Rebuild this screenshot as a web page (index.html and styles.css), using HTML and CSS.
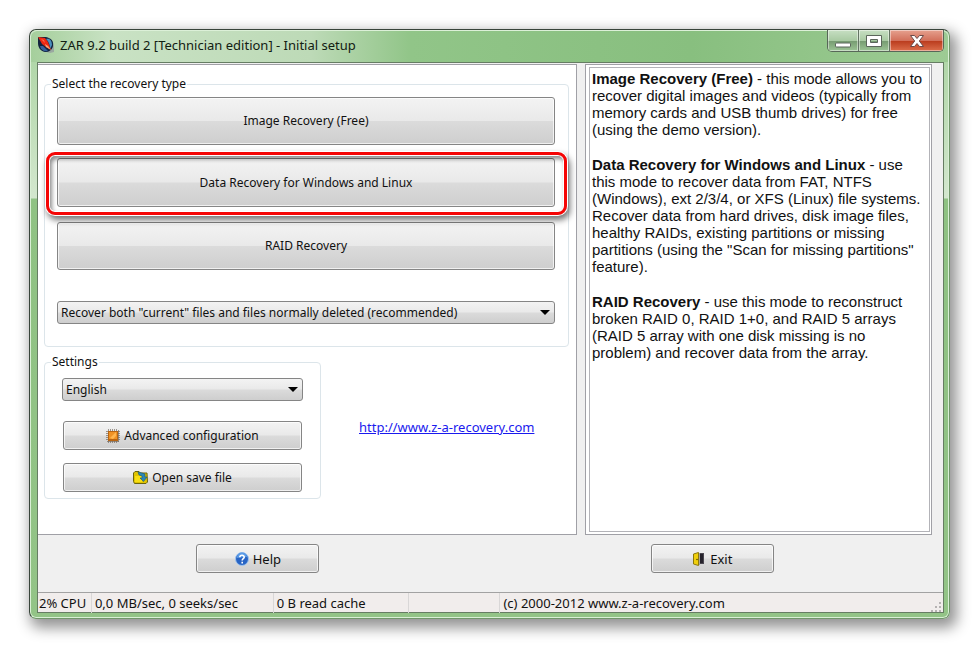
FILE: index.html
```html
<!DOCTYPE html>
<html lang="en">
<head>
<meta charset="utf-8">
<title>ZAR 9.2 - Initial setup</title>
<link rel="stylesheet" href="styles.css">
</head>
<body>
<main class="window">
  <header class="titlebar">
    <svg class="app-icon" viewBox="0 0 18 18" aria-hidden="true">
      <path d="M6 15l7 2 4-1v-7z" fill="#9aa8a0"/>
      <path d="M1 1h8c5 1 8 4 7 9-1 4-4 6-8 6-5-1-7-5-7-9z" fill="#12233f"/>
      <path d="M9 3c4-1 6 2 6 6l-2 4C13 9 12 6 9 3z" fill="#4a8fbd"/>
      <path d="M3 10c1 4 4 6 8 5L6 10z" fill="#35609b"/>
      <path d="M1 1l7 1 3 4 3 8-5-3-4-3z" fill="#ed2812"/>
      <path d="M8 8l3 2 3 4-5-3z" fill="#f8a273"/>
      <path d="M4 3l3 1 1 3z" fill="#ff6a48"/>
    </svg>
    <h1 class="title">ZAR 9.2 build 2 [Technician edition] - Initial setup</h1>
    <div class="caption-buttons">
      <button class="caption minimize" aria-label="Minimize"><svg viewBox="0 0 18 14"><rect x="1.500" y="9" width="15" height="4" rx="1" fill="#fff" stroke="#5b665b"/></svg></button>
      <button class="caption maximize" aria-label="Maximize"><svg viewBox="0 0 18 14"><path fill-rule="evenodd" d="M1.500 1.500h15v11h-15zM5.500 5.500v3h7v-3z" fill="#fff" stroke="#5b665b"/></svg></button>
      <button class="caption close" aria-label="Close"><svg viewBox="0 0 18 14"><path d="M2.500 1.500h4L9 4.500l2.500-3h4L11.300 7l4.200 5.500h-4L9 9.500l-2.500 3h-4L6.700 7z" fill="#fff" stroke="#6b4a48"/></svg></button>
    </div>
  </header>
  <div class="client">
    <div class="panes">
      <section class="setup">
        <fieldset class="group recovery">
          <legend>Select the recovery type</legend>
          <button class="button large">Image Recovery (Free)</button>
          <div class="highlight"><button class="button large">Data Recovery for Windows and Linux</button></div>
          <button class="button large">RAID Recovery</button>
          <div class="dropdown mode">
            <select aria-label="Files to recover"><option>Recover both "current" files and files normally deleted (recommended)</option></select>
          </div>
        </fieldset>
        <div class="lower">
          <fieldset class="group settings">
            <legend>Settings</legend>
            <div class="dropdown language">
              <select aria-label="Language"><option>English</option></select>
            </div>
            <button class="button">
              <svg class="icon" viewBox="0 0 14 14" aria-hidden="true">
                <path d="M2.500 0v14M4.500 0v14M6.500 0v14M8.500 0v14M10.500 0v14M12.500 1v12M0 2.500h14M0 4.500h14M0 6.500h14M0 8.500h14M0 10.500h14M1 12.500h12" stroke="#756b61" stroke-width=".7"/>
                <path d="M2 2h10v10H2z" fill="#b96613"/><path d="M3 3h8v7H3z" fill="#ef9225"/><path d="M4 9l6-6v4L7 10z" fill="#ffb650"/>
              </svg>Advanced configuration</button>
            <button class="button">
              <svg class="icon wide" viewBox="0 0 15 13" aria-hidden="true">
                <path d="M.5 2L2 .5h4L7.500 2H14l.5 9-1.500 1.500H1.500l-1-2z" fill="#e0c400" stroke="#6b650d"/>
                <path d="M2 5h7v6H2z" fill="#f8df12"/>
                <path d="M5 1l4 1 3 1v3h2l-3.500 4.500L7 7h2V5L6 4z" fill="#2b87b5" stroke="#175778" stroke-width=".6"/>
              </svg>Open save file</button>
          </fieldset>
          <a class="site" href="http://www.z-a-recovery.com">http://www.z-a-recovery.com</a>
        </div>
      </section>
      <aside class="info">
        <div class="info-text">
          <p><b>Image Recovery (Free)</b> - this mode allows you to recover digital images and videos (typically from memory cards and USB thumb drives) for free (using the demo version).</p>
          <p><b>Data Recovery for Windows and Linux</b> - use this mode to recover data from FAT, NTFS (Windows), ext 2/3/4, or XFS (Linux) file systems. Recover data from hard drives, disk image files, healthy RAIDs, existing partitions or missing partitions (using the "Scan for missing partitions" feature).</p>
          <p><b>RAID Recovery</b> - use this mode to reconstruct broken RAID 0, RAID 1+0, and RAID 5 arrays (RAID 5 array with one disk missing is no problem) and recover data from the array.</p>
        </div>
      </aside>
    </div>
    <div class="actions">
      <button class="button">
        <svg class="icon" viewBox="0 0 14 14" aria-hidden="true">
          <circle cx="7" cy="7" r="6.500" fill="#2864c4" stroke="#9fc4ee"/>
          <path d="M2 6a5 5 0 0 1 10-1Q7 5 2 6z" fill="#5b9be6"/>
          <path d="M4.800 5.200C5 2.600 9.400 2.700 9.200 5.300 9.100 6.700 7.200 6.800 7.200 8.500M7.200 9.800v1.600" fill="none" stroke="#fff" stroke-width="1.600"/>
        </svg>Help</button>
      <button class="button">
        <svg class="icon" viewBox="0 0 14 14" aria-hidden="true">
          <path d="M6 1h6v11H6z" fill="#4b4750"/><path d="M8 2h3v9H8z" fill="#26232c"/>
          <path d="M1.500 2L6.500.5v13l-5-1.500z" fill="#f0cf0c" stroke="#8c780d"/>
          <path d="M7.500 1v12" stroke="#a8a49a"/><circle cx="5" cy="7.500" r=".8" fill="#574a08"/>
        </svg>Exit</button>
    </div>
    <footer class="status">
      <span>2% CPU</span><span>0,0 MB/sec, 0 seeks/sec</span><span>0 B read cache</span><span></span><span>(c) 2000-2012 www.z-a-recovery.com</span>
      <svg class="grip" viewBox="0 0 11 11" aria-hidden="true"><path d="M8 0h2v2H8zM8 4h2v2H8zM4 4h2v2H4zM8 8h2v2H8zM4 8h2v2H4zM0 8h2v2H0z" fill="#b5b2b2"/></svg>
    </footer>
  </div>
</main>
</body>
</html>
```
FILE: styles.css
```css
* { box-sizing: border-box; }

body {
  display: flex;
  min-height: 100vh;
  margin: 0;
  padding: 29px 30px 30px 29px;
  background: #fff;
  color: #111;
  font: 12px/16px "Noto Sans", sans-serif;
}

button, select { margin: 0; color: inherit; font: inherit; }

.window {
  display: flex;
  flex: 1;
  flex-direction: column;
  min-width: 0;
  padding: 0 5px 5px 7px;
  border: 1px solid #38443a;
  border-right-color: #71966b;
  border-bottom-color: #71966b;
  border-radius: 7px;
  background: linear-gradient(#a9d3a0, #d3e7ce 168px, #8fc283 169px, #93c487);
  box-shadow: inset 0 0 0 1px #d9efd5, 4px 6px 14px 3px rgba(0, 0, 0, .42);
}

.titlebar {
  display: flex;
  align-items: center;
  height: 32px;
  margin: 0 -4px 0 -6px;
  padding: 0 4px 2px 6px;
  border-radius: 6px 6px 0 0;
  background: linear-gradient(90deg, #a5cf9c, #c9e2c4 80px, #bddab7 280px, #91c588 380px, #88bf7f 660px, #9dcb94);
  box-shadow: inset 0 1px #dcf0d8;
}

.app-icon { width: 18px; height: 18px; margin-right: 5px; }

.title {
  flex: 1;
  margin: 0;
  font: 13px/18px "Noto Sans", sans-serif;
  color: #122012;
}

.caption-buttons {
  display: flex;
  align-self: flex-start;
  height: 22px;
  border: 1px solid #576758;
  border-top: 0;
  border-radius: 0 0 5px 5px;
  overflow: hidden;
}

.caption {
  display: flex;
  align-items: center;
  justify-content: center;
  width: 31px;
  padding: 0;
  border: 0;
  border-right: 1px solid #647464;
  background: linear-gradient(#c7dfc3, #a9caa3 50%, #759a70 51%, #9cc495);
  box-shadow: inset 0 0 0 1px rgba(255, 255, 255, .45);
}

.caption svg { width: 18px; height: 14px; }
.caption.close { width: 53px; border: 0; background: linear-gradient(#e6a18f, #d2705b 50%, #b93a1c 51%, #dc6f4c); }

.client {
  display: flex;
  flex: 1;
  flex-direction: column;
  border: 1px solid #667d63;
  background: #f0f0f0;
}

.panes {
  display: grid;
  flex: 1;
  grid-template-columns: 539fr 347fr;
  gap: 8px;
  padding: 1px 11px 0 0;
}

.setup {
  min-width: 0;
  padding: 11px 7px 0 6px;
  border: 1px solid #a0a0a6;
  border-left: 0;
  background: #fff;
}

.group {
  min-width: 0;
  margin: 0 0 7px;
  border: 1px solid #dce5ea;
  border-radius: 4px;
}

.group legend { margin-left: -6px; padding: 0 1px; }

.button {
  display: flex;
  align-items: center;
  justify-content: center;
  gap: 4px;
  width: 100%;
  height: 29px;
  padding: 0;
  border: 1px solid #858585;
  border-radius: 3px;
  background: linear-gradient(#f3f3f3, #e9e9e9 49%, #dbdbdb 51%, #cecece);
  box-shadow: inset 0 0 0 1px rgba(255, 255, 255, .7);
}

.icon { width: 14px; height: 14px; }
.icon.wide { width: 15px; height: 13px; }

.recovery { display: flex; flex-direction: column; padding: 5px 13px 22px 12px; }
.recovery .large { height: 48px; margin-bottom: 13px; }

.highlight { position: relative; margin-bottom: 15px; }
.recovery .highlight .large { height: 49px; margin-bottom: 0; }

.highlight::after {
  content: "";
  position: absolute;
  inset: -6px -12px -8px -11px;
  border: 3px solid #f50505;
  border-radius: 9px;
  box-shadow: 0 0 0 1px #fff, inset 0 0 0 1px #fff, 2px 4px 6px 1px rgba(0, 0, 0, .55), inset 2px 3px 4px 1px rgba(0, 0, 0, .45);
  pointer-events: none;
}

.dropdown { position: relative; }
.dropdown select {
  appearance: none;
  display: block;
  width: 100%;
  height: 23px;
  padding: 0 24px 0 3px;
  border: 1px solid #858585;
  border-radius: 3px;
  background: linear-gradient(#f3f3f3, #e9e9e9 49%, #dbdbdb 51%, #cecece);
}

.dropdown::after {
  content: "";
  position: absolute;
  top: 9px;
  right: 5px;
  border: solid transparent;
  border-width: 5px 5px 0;
  border-top-color: #000;
  pointer-events: none;
}

.mode { margin-top: 18px; }

.lower { display: grid; grid-template-columns: 277fr 38fr 210fr; }
.settings { display: flex; flex-direction: column; padding: 8px 18px 6px; }
.settings legend { margin-left: -12px; }
.language { margin: 0 -1px 20px; }
.settings .button + .button { margin-top: 13px; }
.site { grid-column: 3; align-self: center; padding-bottom: 6px; color: #1a1aee; font-size: 13px; }

.info {
  min-width: 0;
  padding: 2px 1px 2px 3px;
  border: 1px solid #a0a0a6;
  background: #fff;
}

.info-text {
  height: 100%;
  padding: 2px;
  border: 1px solid #b3b3b8;
  color: #111;
  font: 15px/17px "Liberation Sans", sans-serif;
}

.info-text p { margin: 0 0 18px; }

.actions {
  display: flex;
  justify-content: space-between;
  padding: 9px 18.700% 19px 17.500%;
}

.actions .button { width: 123px; font-size: 13px; }

.status {
  display: grid;
  grid-template-columns: 53fr 182fr 135fr 92fr 432fr 12px;
  height: 20px;
  border-top: 1px solid #a2a2a2;
  background: #f1edec;
  font: 13px/20px "Noto Sans", sans-serif;
  white-space: nowrap;
}

.status span { padding-left: 3px; border-left: 1px solid #d9d7d7; }
.status span:first-child { padding-left: 1px; border: 0; }
.grip { align-self: end; width: 11px; height: 11px; }
```
